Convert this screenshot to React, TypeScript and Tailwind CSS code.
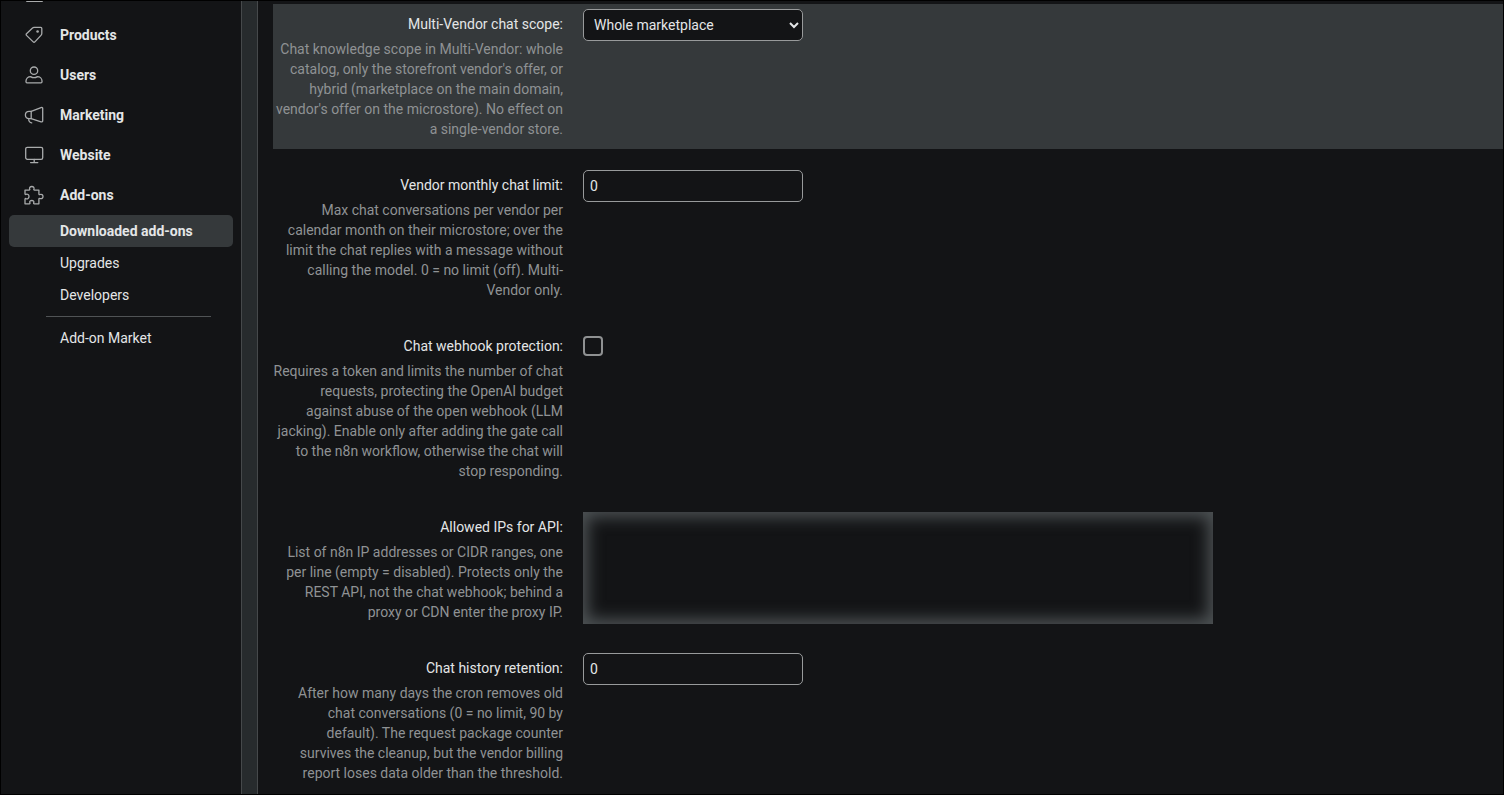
import type { ReactNode } from 'react'

const icons = {
  tag: (
    <>
      <path d="M9 1.400h6.800c.6 0 1 .4 1 1v5.200c0 .6-.2 1.100-.6 1.500l-6.300 6.800a1.200 1.200 0 0 1-1.700 0L1.500 9.400a1.200 1.200 0 0 1 0-1.700l6-5.700c.4-.4.900-.6 1.500-.6z" />
      <circle cx="12.600" cy="5.500" r="1.300" fill="currentColor" stroke="none" />
    </>
  ),
  user: (
    <>
      <circle cx="9" cy="4.700" r="3.700" />
      <path d="M5.600 10.600C3 10.600 1 12.600 1 15v.8c0 .6.400 1 1 1h14c.6 0 1-.4 1-1V15c0-2.400-2-4.400-4.600-4.400-2 1.300-4.800 1.300-6.800 0z" />
    </>
  ),
  megaphone: (
    <>
      <path d="M6.200 5.400 16 1.600c1-.4 1.700 0 1.700.9v12.300c0 1-.7 1.300-1.700 1L6.200 12.600z" />
      <path d="M6.200 5.400H4.100C1.900 5.400.4 6.600.4 9s1.500 3.500 3.700 3.600h2.100M3.600 12.700c.1 2.300 1.200 3.900 3.100 4.200" />
    </>
  ),
  display: (
    <>
      <rect x=".7" y="1.300" width="17" height="12" rx="1.600" />
      <path d="M9.200 13.300v3.200M5.600 16.600h7.200" />
    </>
  ),
  puzzle: (
    <path d="M0 4.100h4.100c.7 0 .8-.6.600-1C4.100 1.500 5.200.5 6.800.5s2.700 1 2.100 2.600c-.2.400-.1 1 .6 1h4.400v3.800c0 .7.600.8 1 .6 1.700-.6 3.100.3 3.100 2s-1.400 2.600-3.100 2c-.4-.2-1-.1-1 .6v4.700H9.300c-.7 0-.8-.5-.6-.9.7-1.500-.4-2.400-1.900-2.400s-2.600.9-1.900 2.400c.2.400.1.900-.6.900H0v-4.600c0-.7.500-.8.900-.6 1.700.7 3.100-.4 3.100-2.100S2.600 7.700.9 8.400c-.4.200-.9.100-.9-.6z" />
  ),
}

function Icon({ name }: { name: keyof typeof icons }) {
  return (
    <svg
      viewBox="0 0 18 18"
      className="size-[18px] shrink-0 overflow-visible text-[#a9abac]"
      fill="none"
      stroke="currentColor"
      strokeWidth="1.3"
      strokeLinecap="round"
      strokeLinejoin="round"
      aria-hidden="true"
    >
      {icons[name]}
    </svg>
  )
}

const mainItems: { label: string; icon: keyof typeof icons }[] = [
  { label: 'Products', icon: 'tag' },
  { label: 'Users', icon: 'user' },
  { label: 'Marketing', icon: 'megaphone' },
  { label: 'Website', icon: 'display' },
  { label: 'Add-ons', icon: 'puzzle' },
]

const fieldClass =
  'block h-8 w-[220px] rounded-[5px] border border-[#989a9b] bg-[#131416] px-1.5 text-[#e4e6e7] outline-none'

type SettingProps = {
  id: string
  label: string
  help: string
  active?: boolean
  children: ReactNode
}

function Setting({ id, label, help, active, children }: SettingProps) {
  return (
    <div className={`flex gap-5 ${active ? 'bg-[#35393b]' : ''}`}>
      <div className="w-[290px] shrink-0 py-2.5 text-right">
        <label htmlFor={id} className="block text-[#e4e6e7]">
          {label}:
        </label>
        <p id={`${id}-help`} className="mt-[5px] text-[#8f9294]">
          {help}
        </p>
      </div>
      <div className="min-w-0 flex-1 pt-[5px]">{children}</div>
    </div>
  )
}

export default function App() {
  return (
    <div className="flex h-screen overflow-hidden border border-black bg-[#131416] font-[Roboto,sans-serif] text-sm leading-5 text-[#e4e6e7]">
      <aside className="w-60 shrink-0">
        {/* bottom edge of the entry scrolled out above */}
        <div className="flex h-3.5 items-start pl-[25px]" aria-hidden="true">
          <span className="h-px w-[17px] rounded-b-sm bg-[#a9abac]" />
        </div>
        <nav aria-label="Main menu" className="px-2">
          <ul>
            {mainItems.map((item) => (
              <li key={item.label}>
                <a href="#" className="flex h-10 items-center gap-[17px] pl-4 font-bold">
                  <Icon name={item.icon} />
                  {item.label}
                </a>
              </li>
            ))}
          </ul>
          <ul>
            <li>
              <a
                href="#"
                aria-current="page"
                className="flex h-8 items-center rounded-[5px] bg-[#35393b] pl-[51px] font-bold"
              >
                Downloaded add-ons
              </a>
            </li>
            <li>
              <a href="#" className="flex h-8 items-center pl-[51px]">
                Upgrades
              </a>
            </li>
            <li>
              <a href="#" className="flex h-8 items-center pl-[51px]">
                Developers
              </a>
            </li>
            <li className="my-[5px] mr-[22px] ml-[37px] h-px bg-[#505355]" role="separator" />
            <li>
              <a href="#" className="flex h-8 items-center pl-[51px]">
                Add-on Market
              </a>
            </li>
          </ul>
        </nav>
      </aside>

      <div className="w-[17px] shrink-0 border-x border-[#46494b] bg-[#272b2d]" />

      <main className="min-w-0 flex-1 pt-[3px] pl-[15px]">
        <form className="flex flex-col gap-4">
          <Setting
            id="chat-scope"
            label="Multi-Vendor chat scope"
            help="Chat knowledge scope in Multi-Vendor: whole catalog, only the storefront vendor's offer, or hybrid (marketplace on the main domain, vendor's offer on the microstore). No effect on a single-vendor store."
            active
          >
            <select id="chat-scope" aria-describedby="chat-scope-help" className={fieldClass}>
              <option>Whole marketplace</option>
            </select>
          </Setting>

          <Setting
            id="chat-limit"
            label="Vendor monthly chat limit"
            help="Max chat conversations per vendor per calendar month on their microstore; over the limit the chat replies with a message without calling the model. 0 = no limit (off). Multi-Vendor only."
          >
            <input
              id="chat-limit"
              type="text"
              defaultValue="0"
              aria-describedby="chat-limit-help"
              className={fieldClass}
            />
          </Setting>

          <Setting
            id="webhook-protection"
            label="Chat webhook protection"
            help="Requires a token and limits the number of chat requests, protecting the OpenAI budget against abuse of the open webhook (LLM jacking). Enable only after adding the gate call to the n8n workflow, otherwise the chat will stop responding."
          >
            <input
              id="webhook-protection"
              type="checkbox"
              aria-describedby="webhook-protection-help"
              className="mt-[5px] block size-5 appearance-none rounded-[4px] border-2 border-[#8f9192] checked:bg-[#8f9192]"
            />
          </Setting>

          <Setting
            id="allowed-ips"
            label="Allowed IPs for API"
            help="List of n8n IP addresses or CIDR ranges, one per line (empty = disabled). Protects only the REST API, not the chat webhook; behind a proxy or CDN enter the proxy IP."
          >
            <textarea
              id="allowed-ips"
              aria-describedby="allowed-ips-help"
              className="block h-28 w-full max-w-[630px] resize-none bg-[#131416] px-3 py-2 shadow-[inset_0_0_16px_5px_#4e5355] outline-none"
            />
          </Setting>

          <Setting
            id="history-retention"
            label="Chat history retention"
            help="After how many days the cron removes old chat conversations (0 = no limit, 90 by default). The request package counter survives the cleanup, but the vendor billing report loses data older than the threshold."
          >
            <input
              id="history-retention"
              type="text"
              defaultValue="0"
              aria-describedby="history-retention-help"
              className={fieldClass}
            />
          </Setting>
        </form>
      </main>
    </div>
  )
}
